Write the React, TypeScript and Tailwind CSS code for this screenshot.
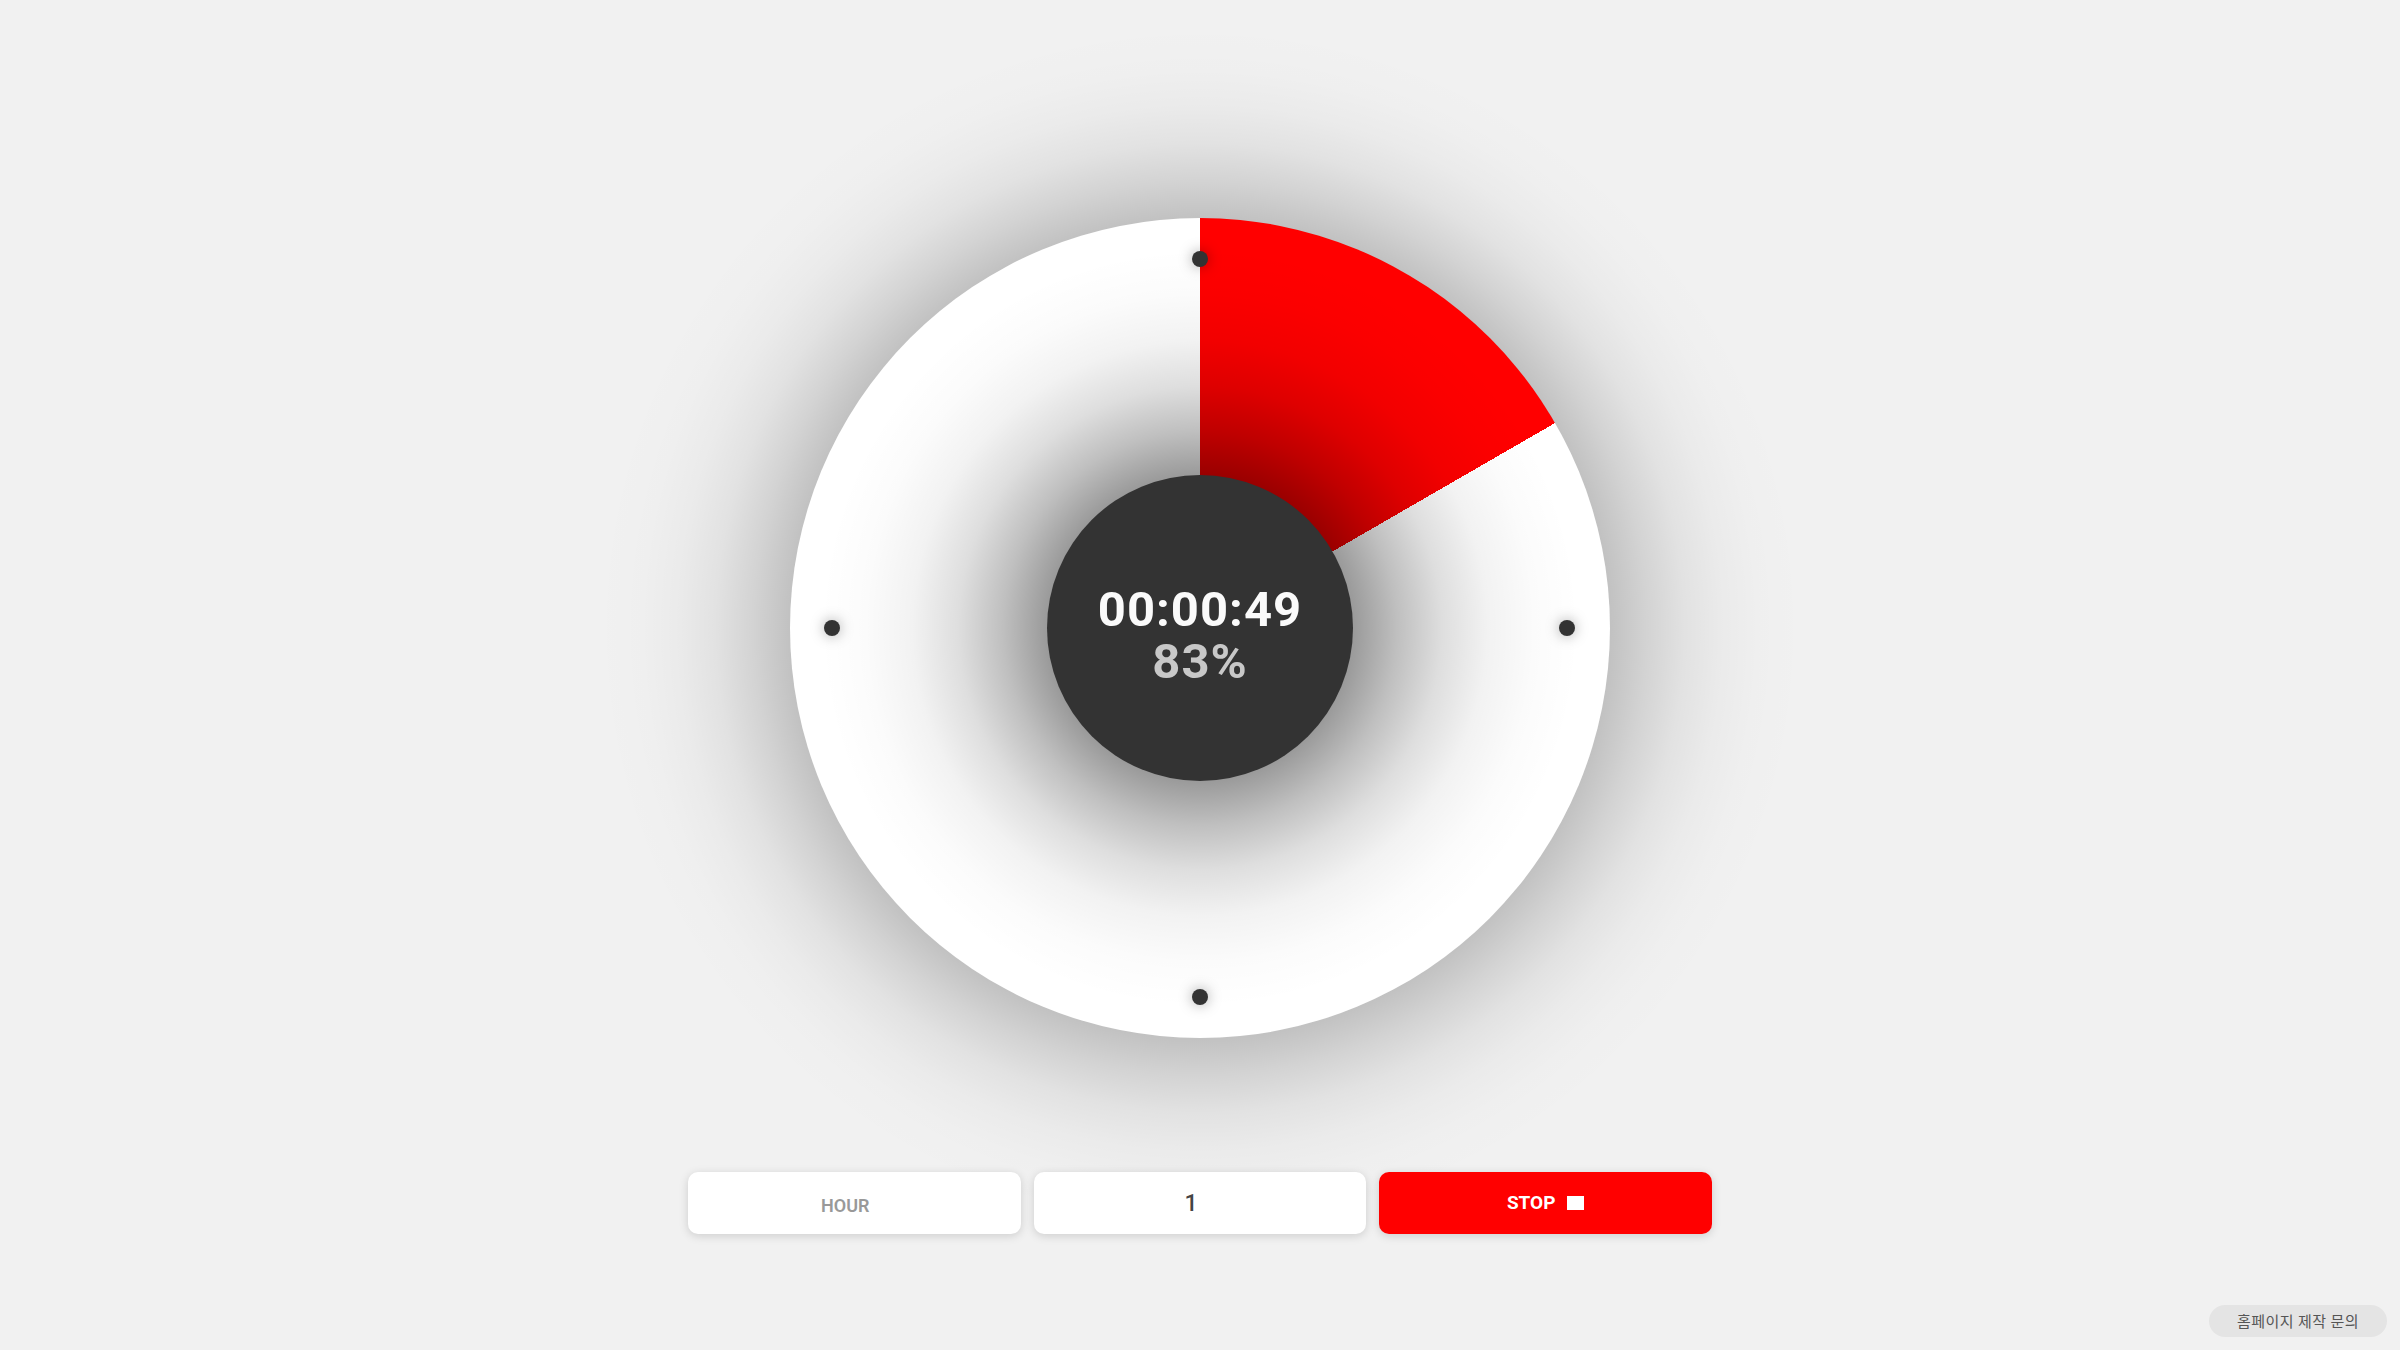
import React from "react";

// timer dial + controls
const dotPos = [
  "top-[33px] left-1/2 -translate-x-1/2",
  "bottom-[33px] left-1/2 -translate-x-1/2",
  "left-[34px] top-1/2 -translate-y-1/2",
  "right-[35px] top-1/2 -translate-y-1/2",
];

function Dial() {
  return (
    <div className="-my-[200px] p-[200px] bg-[radial-gradient(circle,rgba(0,0,0,0.2)_409px,rgba(0,0,0,0.124)_447px,rgba(0,0,0,0.063)_485px,rgba(0,0,0,0.027)_522px,rgba(0,0,0,0.009)_560px,transparent_605px)]">
      <div className="relative flex h-[820px] w-[820px] items-center justify-center rounded-full bg-[radial-gradient(circle,rgba(0,0,0,0.4)_152px,rgba(0,0,0,0.25)_197px,rgba(0,0,0,0.13)_242px,rgba(0,0,0,0.05)_288px,rgba(0,0,0,0.015)_335px,transparent_380px),conic-gradient(#ff0000_0deg_60deg,#ffffff_60deg_360deg)]">
        {dotPos.map((p) => (
          <span
            key={p}
            className={`absolute h-4 w-4 rounded-full bg-[#333333] shadow-[0_0_14px_rgba(0,0,0,0.35)] ${p}`}
          />
        ))}
        <div className="flex h-[306px] w-[306px] flex-col items-center justify-center rounded-full bg-[#333333] pt-4 font-['Roboto',sans-serif] font-bold">
          <div className="text-[49px] leading-[52px] tracking-[1px] text-[#fafafa]">00:00:49</div>
          <div className="text-[49px] leading-[52px] tracking-[1px] text-[#c8c8c8]">83%</div>
        </div>
      </div>
    </div>
  );
}

export default function App() {
  return (
    <div className="flex min-h-screen flex-col items-center bg-[#f1f1f1] pt-[218px] font-['Roboto',sans-serif]">
      <Dial />
      <div className="mt-[134px] grid w-[1024px] grid-cols-3 gap-[13px]">
        <div className="flex h-[62px] items-center justify-center rounded-[10px] bg-white pr-[18px] pt-[4px] text-[18px] font-semibold text-[#999999] shadow-[0_2px_10px_rgba(0,0,0,0.15)]">
          HOUR
        </div>
        <div className="flex h-[62px] items-center justify-center rounded-[10px] bg-white pr-[18px] pt-[2px] text-[23px] font-medium text-[#444444] shadow-[0_2px_10px_rgba(0,0,0,0.15)]">
          1
        </div>
        <button className="flex h-[62px] items-center justify-center gap-3 rounded-[10px] bg-[#ff0000] text-[19px] font-bold text-white shadow-[0_2px_10px_rgba(0,0,0,0.15)]">
          <span>STOP</span>
          <span className="h-[14px] w-[17px] bg-white" />
        </button>
      </div>
      <a className="fixed bottom-[13px] right-[13px] flex h-[32px] w-[178px] items-center justify-center rounded-full bg-[#e4e4e4] font-['Noto_Sans_CJK_KR',sans-serif] text-[15px] tracking-[0.5px] text-[#555555]">
        홈페이지 제작 문의
      </a>
    </div>
  );
}
